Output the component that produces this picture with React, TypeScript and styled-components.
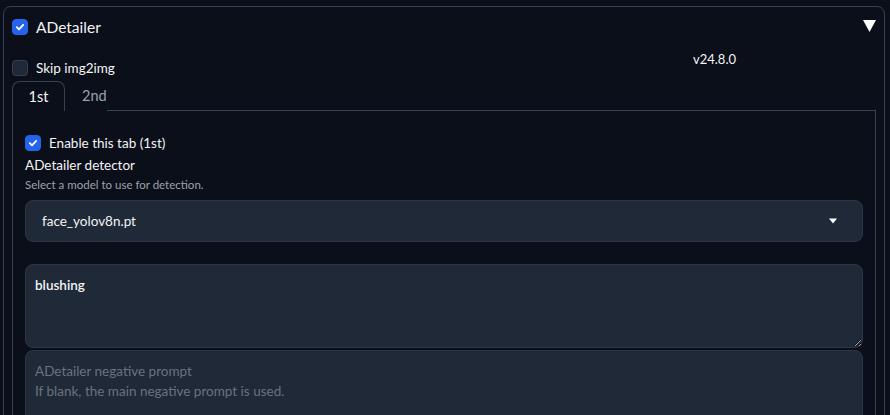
import * as React from "react";
import styled, { createGlobalStyle } from "styled-components";

const GlobalStyle = createGlobalStyle`
    html, body {
        margin: 0;
        padding: 0;
        background: #0b0f19;
        color: #f3f4f6;
        font-family: Lato, "Noto Sans", sans-serif;
        color-scheme: dark;
    }
    * {
        box-sizing: border-box;
    }
`;

const Page = styled.div`
    padding: 6px 5px 0 3px;
    height: 415px;
    overflow: hidden;
`;

const Accordion = styled.div`
    border: 1px solid #374151;
    border-radius: 8px;
    padding: 0 8px;
    min-height: 420px;
`;

const Header = styled.div`
    display: flex;
    align-items: center;
    height: 40px;
`;

const Title = styled.span`
    font-size: 15.5px;
    margin-left: 8px;
    flex: 1;
`;

const Caret = styled.svg`
    width: 13px;
    height: 12px;
    margin-top: -2px;
`;

const Box = styled.span<{ $checked?: boolean }>`
    display: inline-flex;
    align-items: center;
    justify-content: center;
    width: 16px;
    height: 16px;
    flex: none;
    border-radius: 4px;
    background: ${({ $checked }) => ($checked ? "#2563eb" : "#1f2937")};
    border: 1px solid ${({ $checked }) => ($checked ? "#2563eb" : "#374151")};
`;

const Check = ({ checked }: { checked?: boolean }) => (
    <Box $checked={checked}>
        {checked && (
            <svg width="10" height="10" viewBox="0 0 10 10">
                <path d="M1.8 5.2 L4 7.3 L8.2 2.8" fill="none" stroke="#fff" strokeWidth="1.8" strokeLinecap="round" strokeLinejoin="round" />
            </svg>
        )}
    </Box>
);

const TopRow = styled.div`
    display: flex;
    justify-content: space-between;
`;

const CheckRow = styled.label<{ $top?: number }>`
    display: flex;
    align-items: center;
    gap: 8px;
    font-size: 13.5px;
    margin-top: ${({ $top }) => $top ?? 0}px;
`;

const Version = styled.div`
    width: 330px;
    font-size: 13px;
    padding-top: 4px;
    padding-right: 140px;
    text-align: right;
`;

const TabBar = styled.div`
    display: flex;
    margin-top: 5px;
    height: 29px;
`;

const Tab = styled.div<{ $active?: boolean }>`
    width: ${({ $active }) => ($active ? "53px" : "auto")};
    padding: ${({ $active }) => ($active ? "0" : "0 0 0 17px")};
    text-align: ${({ $active }) => ($active ? "center" : "left")};
    line-height: 29px;
    font-size: 14.5px;
    color: ${({ $active }) => ($active ? "#f3f4f6" : "#9ca3af")};
    border: ${({ $active }) => ($active ? "1px solid #374151" : "none")};
    border-bottom: none;
    border-radius: 8px 8px 0 0;
    background: #0b0f19;
    position: relative;
    z-index: 1;
    margin-bottom: -1px;
    height: 30px;
`;

const TabPanel = styled.div`
    border: 1px solid #374151;
    border-bottom: none;
    padding: 24px 12px 0;
    min-height: 320px;
`;

const FieldLabel = styled.div`
    font-size: 13.5px;
    margin-top: 6px;
`;

const Info = styled.div`
    font-size: 11.5px;
    color: #9ca3af;
    margin-top: 5px;
`;

const Select = styled.div`
    display: flex;
    align-items: center;
    justify-content: space-between;
    height: 42px;
    margin-top: 9px;
    padding: 0 25px 0 16px;
    background: #1f2937;
    border: 1px solid #2b3544;
    border-radius: 8px;
    font-size: 13.5px;
`;

const Prompt = styled.textarea<{ $rows: number }>`
    display: block;
    width: 100%;
    height: ${({ $rows }) => $rows}px;
    margin: 0 0 2px;
    padding: 10px 9px;
    background: #1f2937;
    border: 1px solid #2b3544;
    border-radius: 8px;
    color: #f3f4f6;
    font-family: Lato, "Noto Sans", sans-serif;
    font-size: 13.5px;
    font-weight: 600;
    line-height: 20px;
    resize: vertical;
    outline: none;
    &::placeholder {
        color: #6b7280;
        font-weight: 400;
    }
`;

const Prompts = styled.div`
    margin-top: 22px;
`;

export default function App() {
    return (
        <>
            <GlobalStyle />
            <Page>
                <Accordion>
                    <Header>
                        <Check checked />
                        <Title>ADetailer</Title>
                        <Caret viewBox="0 0 13 12">
                            <polygon points="0,0 13,0 6.5,12" fill="#fff" />
                        </Caret>
                    </Header>
                    <TopRow>
                        <CheckRow $top={13}>
                            <Check />
                            Skip img2img
                        </CheckRow>
                        <Version>v24.8.0</Version>
                    </TopRow>
                    <TabBar>
                        <Tab $active>1st</Tab>
                        <Tab>2nd</Tab>
                    </TabBar>
                    <TabPanel>
                        <CheckRow>
                            <Check checked />
                            Enable this tab (1st)
                        </CheckRow>
                        <FieldLabel>ADetailer detector</FieldLabel>
                        <Info>Select a model to use for detection.</Info>
                        <Select>
                            face_yolov8n.pt
                            <svg width="8" height="6" viewBox="0 0 8 6">
                                <polygon points="0,0.5 8,0.5 4,5.5" fill="#fff" />
                            </svg>
                        </Select>
                        <Prompts>
                            <Prompt $rows={84} readOnly value="blushing" />
                            <Prompt
                                $rows={84}
                                readOnly
                                placeholder={"ADetailer negative prompt\nIf blank, the main negative prompt is used."}
                            />
                        </Prompts>
                    </TabPanel>
                </Accordion>
            </Page>
        </>
    );
}
